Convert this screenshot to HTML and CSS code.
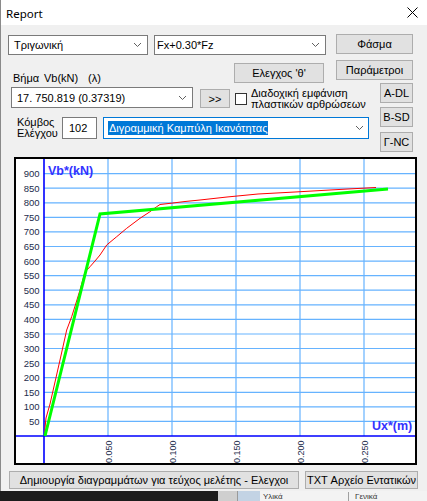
FILE: index.html
```html
<!DOCTYPE html>
<html>
<head>
<meta charset="utf-8">
<title>Report</title>
<link rel="stylesheet" href="styles.css">
</head>
<body>
<div class="window">
  <div class="titlebar">
    <span class="title">Report</span>
    <svg class="close" width="11" height="11" viewBox="0 0 11 11"><path d="M0.5 0.5L10.5 10.5M10.5 0.5L0.5 10.5" stroke="#000" stroke-width="1" fill="none"/></svg>
  </div>

  <div class="row1">
    <div class="select s1"><span>Τριγωνική</span><svg class="chev" width="7" height="4" viewBox="0 0 7 4"><path d="M0 0L3.5 3.5L7 0" stroke="#606060" fill="none"/></svg></div>
    <div class="select s2"><span>Fx+0.30*Fz</span><svg class="chev" width="7" height="4" viewBox="0 0 7 4"><path d="M0 0L3.5 3.5L7 0" stroke="#606060" fill="none"/></svg></div>
    <div class="btn b-fasma">Φάσμα</div>
  </div>

  <div class="row2">
    <div class="step-label"><span class="w1">Βήμα</span><span class="w2">Vb(kN)</span><span>(λ)</span></div>
    <div class="btn b-theta">Ελεγχος 'θ'</div>
    <div class="btn b-param">Παράμετροι</div>
  </div>

  <div class="row3">
    <div class="left">
      <div class="sub1">
        <div class="select s3"><span>17. 750.819 (0.37319)</span><svg class="chev" width="7" height="4" viewBox="0 0 7 4"><path d="M0 0L3.5 3.5L7 0" stroke="#606060" fill="none"/></svg></div>
        <div class="btn b-go">&gt;&gt;</div>
        <div class="check"></div>
        <div class="check-label">Διαδοχική εμφάνιση<br>πλαστικών αρθρώσεων</div>
      </div>
      <div class="sub2">
        <div class="node-label">Κόμβος<br>Ελέγχου</div>
        <div class="num">102</div>
        <div class="select s4"><span class="hl">Διγραμμική Καμπύλη Ικανότητας</span><svg class="chev" width="7" height="4" viewBox="0 0 7 4"><path d="M0 0L3.5 3.5L7 0" stroke="#606060" fill="none"/></svg></div>
      </div>
    </div>
    <div class="limits">
      <div class="btn lim">A-DL</div>
      <div class="btn lim">B-SD</div>
      <div class="btn lim lim-last">Γ-NC</div>
    </div>
  </div>

  <div class="chart">
    <svg width="399" height="304" viewBox="16 159 399 304">
      <path class="grid" d="M44 173.6H415M44 188.2H415M44 202.8H415M44 217.3H415M44 231.9H415M44 246.5H415M44 261.1H415M44 275.6H415M44 290.2H415M44 304.8H415M44 319.4H415M44 334H415M44 348.5H415M44 363.1H415M44 377.7H415M44 392.3H415M44 406.8H415M44 421.4H415M108 159V436M172 159V436M236 159V436M300 159V436M364 159V436"/>
      <path class="axis" d="M44 159V463M16 436H415"/>
      <g class="ylab">
        <text x="39.5" y="177.1">900</text>
        <text x="39.5" y="191.7">850</text>
        <text x="39.5" y="206.3">800</text>
        <text x="39.5" y="220.8">750</text>
        <text x="39.5" y="235.4">700</text>
        <text x="39.5" y="250">650</text>
        <text x="39.5" y="264.6">600</text>
        <text x="39.5" y="279.1">550</text>
        <text x="39.5" y="293.7">500</text>
        <text x="39.5" y="308.3">450</text>
        <text x="39.5" y="322.9">400</text>
        <text x="39.5" y="337.5">350</text>
        <text x="39.5" y="352">300</text>
        <text x="39.5" y="366.6">250</text>
        <text x="39.5" y="381.2">200</text>
        <text x="39.5" y="395.8">150</text>
        <text x="39.5" y="410.3">100</text>
        <text x="39.5" y="424.9">50</text>
      </g>
      <g class="xlab">
        <text x="111.5" y="463" transform="rotate(-90 111.5 463)">0.050</text>
        <text x="175.5" y="463" transform="rotate(-90 175.5 463)">0.100</text>
        <text x="239.5" y="463" transform="rotate(-90 239.5 463)">0.150</text>
        <text x="303.5" y="463" transform="rotate(-90 303.5 463)">0.200</text>
        <text x="367.5" y="463" transform="rotate(-90 367.5 463)">0.250</text>
      </g>
      <text class="axtitle" x="48" y="175">Vb*(kN)</text>
      <text class="axtitle" x="372" y="430">Ux*(m)</text>
      <polyline class="red" points="45,436 45,428 46,418 50,404 55,382 60,360 66.7,330 71.7,316.7 76,303 80,290 85,272 90,266.7 95,261 100,255 106.7,245 116.7,236.7 126.7,228.3 140,218.3 150,211.7 156.7,206.7 160,204.5 173,203 185,201.5 200,200 227,197 258,194 295,192 330,190 348,189 376,187.5"/>
      <polyline class="green" points="45,436 100,214 388,189"/>
    </svg>
  </div>

  <div class="bottom">
    <div class="btn b-make">Δημιουργία διαγραμμάτων για τεύχος μελέτης - Ελεγχοι</div>
    <div class="btn b-txt">TXT Αρχείο Εντατικών</div>
  </div>
</div>
<div class="strip">
  <div class="st-dark"></div>
  <div class="st-gray"></div>
  <div class="st-blue"></div>
  <div class="st-light"><span class="st-t1">Υλικά</span><span class="st-sep"></span><span class="st-t2">Γενικά</span></div>
</div>
</body>
</html>
```

FILE: styles.css
```css
* { box-sizing: border-box; }
html, body { margin: 0; padding: 0; }
body {
  width: 427px;
  height: 501px;
  overflow: hidden;
  background: #1c1c1c;
  font-family: "Liberation Sans", Arial, sans-serif;
  font-size: 11px;
  color: #000;
}
.window {
  height: 491px;
  background: #f0f0f0;
  border-left: 1px solid #8a8a8a;
}
.titlebar {
  height: 25px;
  background: #fff;
  display: flex;
  align-items: center;
  justify-content: space-between;
  padding: 0 9px 0 5px;
}
.title {
  font-family: "Noto Sans", "Liberation Sans", sans-serif;
  font-size: 11.5px;
  margin-top: 1px;
}
.close { display: block; }

.select {
  background: #fff;
  border: 1px solid #7a7a7a;
  display: flex;
  align-items: center;
  justify-content: space-between;
  padding: 0 6px 0 5px;
  height: 20px;
  white-space: nowrap;
}
.chev { display: block; flex: none; }
.btn {
  background: #e1e1e1;
  border: 1px solid #adadad;
  display: flex;
  align-items: center;
  justify-content: center;
  height: 20px;
  white-space: nowrap;
}

.row1 {
  display: flex;
  align-items: flex-start;
  height: 30px;
  padding: 9px 0 0 7px;
}
.s1 { width: 140px; margin-top: 1px; }
.s2 { width: 172px; margin: 1px 0 0 6px; padding-left: 2px; }
.b-fasma { width: 77px; margin-left: 10px; }

.row2 {
  display: flex;
  align-items: flex-start;
  height: 28px;
}
.step-label {
  display: flex;
  width: 221px;
  margin: 17px 0 0 12px;
  line-height: 12px;
}
.w1 { width: 31px; }
.w2 { width: 44px; }
.b-theta { width: 90px; margin-top: 8px; }
.b-param { width: 77px; margin: 5px 0 0 12px; }

.row3 {
  display: flex;
  height: 69px;
}
.left {
  width: 379px;
  padding-left: 10px;
}
.sub1 {
  display: flex;
  align-items: flex-start;
  height: 21px;
  margin-top: 4px;
}
.s3 { width: 182px; height: 21px; }
.b-go { width: 30px; height: 19px; margin: 2px 0 0 7px; }
.check {
  width: 12px;
  height: 12px;
  margin: 6px 0 0 5px;
  background: #fff;
  border: 1px solid #333;
}
.check-label {
  margin: 1px 0 0 4px;
  line-height: 11px;
  white-space: nowrap;
}
.sub2 {
  display: flex;
  align-items: flex-start;
  margin-top: 9px;
}
.node-label {
  width: 45px;
  margin-left: 6px;
  line-height: 11px;
}
.num {
  width: 35px;
  height: 22px;
  background: #fff;
  border: 1px solid #7a7a7a;
  display: flex;
  align-items: center;
  padding-left: 6px;
}
.s4 {
  width: 266px;
  height: 22px;
  margin-left: 6px;
  border-color: #0078d7;
  padding: 0 5px 0 4px;
}
.hl {
  background: #0078d7;
  color: #fff;
  padding: 1px 1px 1px 1px;
  line-height: 12px;
}
.limits {
  display: flex;
  flex-direction: column;
  width: 33px;
}
.lim { width: 33px; height: 20px; margin-bottom: 4px; }
.lim-last { margin-top: 1px; margin-bottom: 0; }

.chart {
  width: 403px;
  height: 308px;
  margin: 5px 0 0 13px;
  border: 2px solid #000;
  background: #fff;
}
.chart svg { display: block; }
.grid { stroke: #66b3ff; stroke-width: 1.2; fill: none; }
.axis { stroke: #0000ff; stroke-width: 1.6; fill: none; }
.ylab text {
  font-family: "Liberation Sans", Arial, sans-serif;
  font-size: 9.5px;
  fill: #1c2c4c;
  text-anchor: end;
}
.xlab text {
  font-family: "Liberation Sans", Arial, sans-serif;
  font-size: 9px;
  fill: #1c2c4c;
}
.axtitle {
  font-family: "Liberation Sans", Arial, sans-serif;
  font-size: 12.5px;
  font-weight: bold;
  fill: #3333ff;
}
.red { fill: none; stroke: #ff0000; stroke-width: 1; }
.green { fill: none; stroke: #00ff00; stroke-width: 3; }

.bottom {
  display: flex;
  margin: 6px 0 0 8px;
}
.b-make { width: 290px; height: 18px; }
.b-txt { width: 113px; height: 18px; margin-left: 6px; }

.strip {
  display: flex;
  height: 10px;
}
.st-dark { width: 218px; background: #1c1c1c; }
.st-gray { width: 20px; background: #cfcfcf; border-right: 1px solid #9a9a9a; }
.st-blue { width: 22px; background: #c3d3e4; }
.st-light {
  flex: 1;
  background: #f3f3f3;
  display: flex;
  overflow: hidden;
  font-size: 8px;
  line-height: 9px;
  padding-top: 1px;
  color: #333;
}
.st-t1 { width: 88px; padding-left: 3px; }
.st-sep { width: 1px; background: #a0a0a0; }
.st-t2 { padding-left: 6px; }
```
